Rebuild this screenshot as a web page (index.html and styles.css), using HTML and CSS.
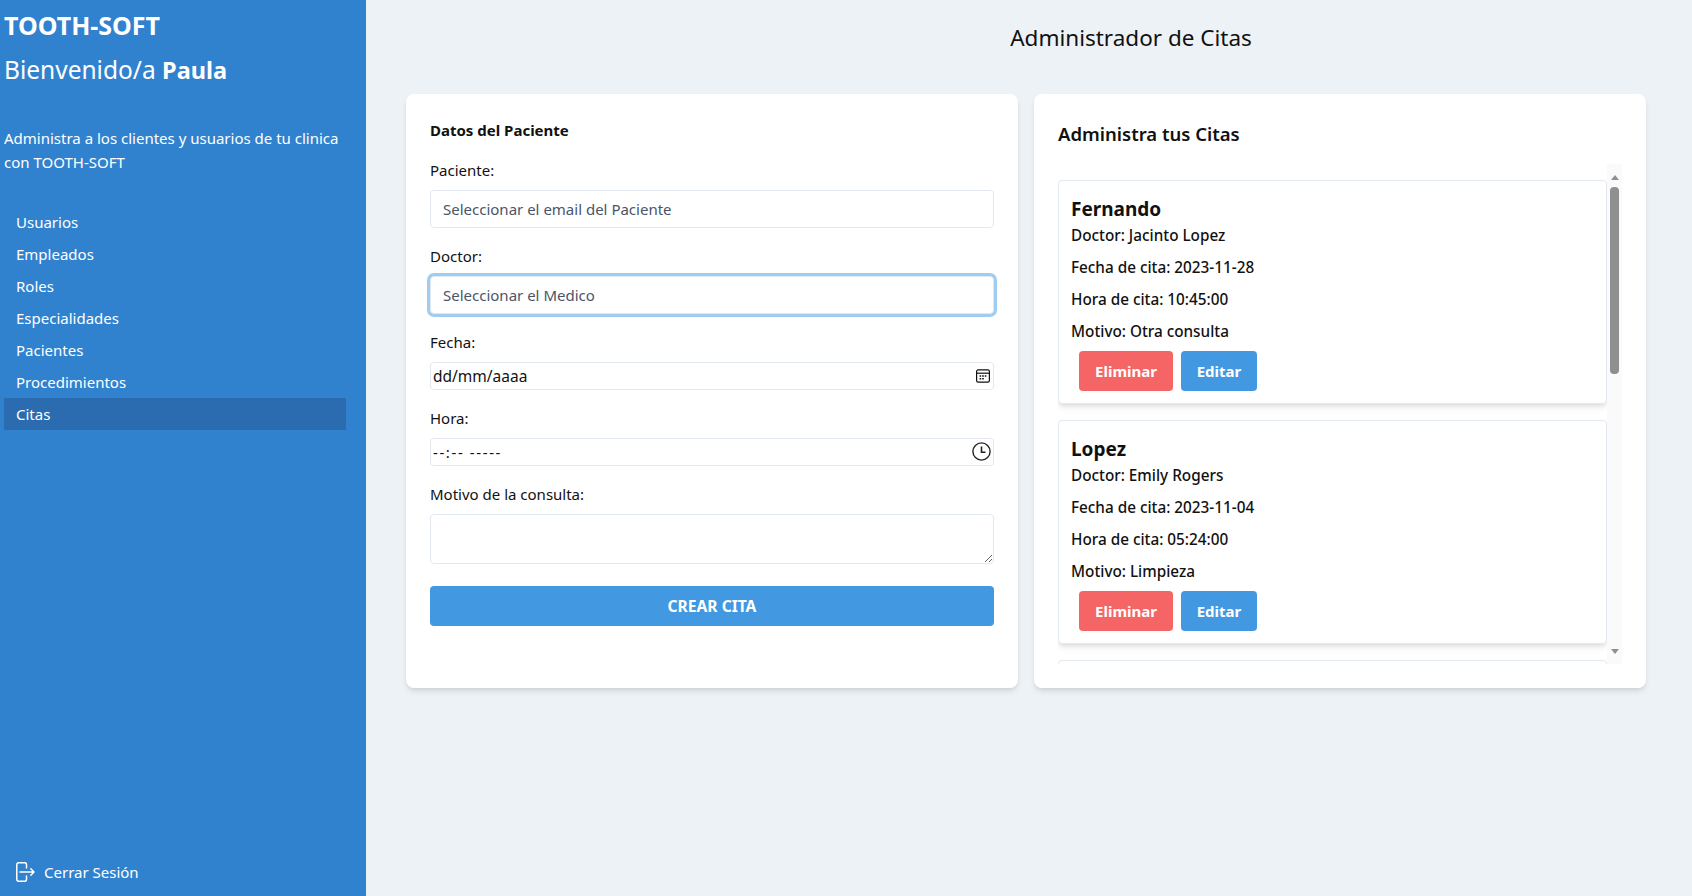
FILE: index.html
```html
<!DOCTYPE html>
<html lang="es">
<head>
<meta charset="UTF-8" />
<meta name="viewport" content="width=device-width, initial-scale=1" />
<title>Administrador de Citas</title>
<link rel="stylesheet" href="styles.css">
</head>
<body>
<aside class="sidebar">
  <h1 class="brand">TOOTH-SOFT</h1>
  <p class="welcome">Bienvenido/a <strong>Paula</strong></p>
  <p class="intro">Administra a los clientes y usuarios de tu clinica con TOOTH-SOFT</p>
  <nav class="menu">
    <a href="#">Usuarios</a>
    <a href="#">Empleados</a>
    <a href="#">Roles</a>
    <a href="#">Especialidades</a>
    <a href="#">Pacientes</a>
    <a href="#">Procedimientos</a>
    <a href="#" class="active">Citas</a>
  </nav>
  <a href="#" class="logout">
    <svg width="20" height="20" viewBox="0 0 20 20" fill="none" stroke="#fff" stroke-width="1.5" stroke-linecap="round" stroke-linejoin="round">
      <path d="M10.5 6V2.5a1.8 1.8 0 0 0-1.8-1.8H2.6A1.8 1.8 0 0 0 .8 2.5v15a1.8 1.8 0 0 0 1.8 1.8h6.1a1.8 1.8 0 0 0 1.8-1.8V14"/>
      <path d="M4 10h14M14.8 6.8 18 10l-3.2 3.2"/>
    </svg>
    Cerrar Sesión
  </a>
</aside>

<main class="content">
  <h2 class="page-title">Administrador de Citas</h2>
  <div class="columns">
    <form class="panel form-panel">
      <h3 class="form-title">Datos del Paciente</h3>

      <label for="paciente">Paciente:</label>
      <input class="field" type="text" id="paciente" placeholder="Seleccionar el email del Paciente" />

      <label for="doctor">Doctor:</label>
      <input class="field focused" type="text" id="doctor" placeholder="Seleccionar el Medico" />

      <label for="fecha">Fecha:</label>
      <div class="field-icon">
        <input class="date-text" type="text" id="fecha" value="dd/mm/aaaa" />
        <svg class="cal-icon" width="14" height="14" viewBox="0 0 14 14" fill="none" stroke="#111" stroke-width="1.2">
          <rect x=".6" y=".9" width="12.8" height="12.2" rx="1.6"/>
          <path d="M.6 4.2h12.8"/>
          <path d="M3.6 7h1.6M6.2 7h1.6M8.8 7h1.6M3.6 9.8h1.6M6.2 9.8h1.6" stroke-width="1.5"/>
        </svg>
      </div>

      <label for="hora">Hora:</label>
      <div class="field-icon">
        <input class="time-text" type="text" id="hora" value="--:-- -----" />
        <svg class="clock-icon" width="19" height="19" viewBox="0 0 19 19" fill="none" stroke="#222" stroke-width="1.4">
          <circle cx="9.5" cy="9.5" r="8.6"/>
          <path d="M9.5 4.6v5.6h4" stroke-width="1.6"/>
        </svg>
      </div>

      <label for="motivo">Motivo de la consulta:</label>
      <textarea class="field motivo" id="motivo"></textarea>

      <button type="button" class="btn-crear">CREAR CITA</button>
    </form>

    <section class="panel list-panel">
      <h3 class="list-title">Administra tus Citas</h3>
      <div class="cita-scroll">
        <div class="cita-list">
          <article class="cita">
            <h4>Fernando</h4>
            <p>Doctor: Jacinto Lopez</p>
            <p>Fecha de cita: 2023-11-28</p>
            <p>Hora de cita: 10:45:00</p>
            <p>Motivo: Otra consulta</p>
            <div class="cita-actions">
              <button type="button" class="btn btn-delete">Eliminar</button>
              <button type="button" class="btn btn-edit">Editar</button>
            </div>
          </article>
          <article class="cita">
            <h4>Lopez</h4>
            <p>Doctor: Emily Rogers</p>
            <p>Fecha de cita: 2023-11-04</p>
            <p>Hora de cita: 05:24:00</p>
            <p>Motivo: Limpieza</p>
            <div class="cita-actions">
              <button type="button" class="btn btn-delete">Eliminar</button>
              <button type="button" class="btn btn-edit">Editar</button>
            </div>
          </article>
          <article class="cita"></article>
        </div>
        <div class="scrollbar">
          <span class="arrow-up"></span>
          <span class="thumb"></span>
          <span class="arrow-down"></span>
        </div>
      </div>
    </section>
  </div>
</main>
</body>
</html>
```

FILE: styles.css
```css
* {
  box-sizing: border-box;
}
html, body {
  height: 100%;
}
body {
  margin: 0;
  display: flex;
  height: 896px;
  overflow: hidden;
  background: #edf2f7;
  font-family: "Noto Sans", "Open Sans", sans-serif;
  font-size: 15px;
  line-height: 24px;
  color: #111;
}

/* Sidebar */
.sidebar {
  width: 366px;
  flex-shrink: 0;
  display: flex;
  flex-direction: column;
  padding: 9px 20px 12px 4px;
  background: #3182ce;
  color: #fff;
}
.brand {
  margin: 0;
  font-size: 25px;
  line-height: 32px;
  font-weight: 700;
}
.welcome {
  margin: 13px 0 0;
  font-size: 24.5px;
  line-height: 32px;
}
.welcome strong {
  font-size: 23.5px;
  font-weight: 700;
}
.intro {
  margin: 40px 0 0;
}
.menu {
  margin-top: 32px;
  display: flex;
  flex-direction: column;
}
.menu a {
  height: 32px;
  line-height: 32px;
  padding-left: 12px;
  color: #fff;
  text-decoration: none;
}
.menu a.active {
  background: #2b6cb0;
}
.logout {
  margin-top: auto;
  padding-left: 12px;
  display: flex;
  align-items: center;
  gap: 8px;
  color: #fff;
  text-decoration: none;
}

/* Main area */
.content {
  flex: 1;
  padding: 22px 0 0 40px;
}
.page-title {
  margin: 0 0 40px 210px;
  width: 1030px;
  text-align: center;
  font-size: 22.5px;
  line-height: 32px;
  font-weight: 400;
}
.columns {
  display: grid;
  grid-template-columns: 612px 612px;
  gap: 16px;
}
.panel {
  height: 594px;
  background: #fff;
  border-radius: 8px;
  box-shadow: 0 4px 6px -1px rgba(0,0,0,0.1), 0 2px 4px -1px rgba(0,0,0,0.06);
}

/* Form */
.form-panel {
  padding: 25px 24px;
  display: flex;
  flex-direction: column;
}
.form-title {
  margin: 0 0 18px;
  font-size: 15px;
  line-height: 22px;
  font-weight: 700;
}
label {
  display: block;
  line-height: 22px;
  margin-bottom: 9px;
}
.field,
.field-icon {
  display: block;
  width: 100%;
  margin-bottom: 17px;
  border: 1px solid #e2e8f0;
  border-radius: 4px;
  background: #fff;
  font: inherit;
}
.field {
  height: 38px;
  padding: 0 12px;
  color: #4a5568;
}
.field::placeholder {
  color: #4a5568;
  opacity: 1;
}
.field.focused {
  outline: none;
  box-shadow: 0 0 0 3px rgba(66,153,225,0.5);
}
.field-icon {
  height: 28px;
  display: flex;
  align-items: center;
  padding: 0 2px;
}
.field-icon input {
  flex: 1;
  min-width: 0;
  border: none;
  outline: none;
  padding: 0;
  font: inherit;
  color: #111;
  background: transparent;
}
.field-icon .date-text {
  font-size: 15.5px;
}
.field-icon .time-text {
  letter-spacing: 1.6px;
}
.cal-icon {
  margin-right: 1px;
}
.clock-icon {
  margin: -2px 0 0;
}
.motivo {
  height: 50px;
  margin-bottom: 22px;
  padding: 8px 12px;
  resize: vertical;
}
.btn-crear {
  height: 40px;
  border: none;
  border-radius: 4px;
  background: #4299e1;
  color: #fff;
  font: inherit;
  font-size: 15.6px;
  font-weight: 700;
}

/* Citas list */
.list-panel {
  padding: 26px 24px;
}
.list-title {
  margin: 0 0 16px;
  font-size: 18.5px;
  line-height: 28px;
  font-weight: 600;
}
.cita-scroll {
  display: flex;
  height: 500px;
}
.cita-list {
  flex: 1;
  min-width: 0;
  padding-top: 16px;
  overflow: hidden;
}
.cita {
  height: 224px;
  margin-bottom: 16px;
  padding: 14px 12px 0;
  background: #fff;
  border: 1px solid #e2e8f0;
  border-radius: 4px;
  box-shadow: 0 4px 6px -1px rgba(0,0,0,0.1), 0 2px 4px -1px rgba(0,0,0,0.06);
}
.cita h4 {
  margin: 0;
  font-size: 19px;
  line-height: 28px;
  font-weight: 700;
}
.cita p {
  margin: 0 0 8px;
  font-size: 15.3px;
  font-weight: 500;
}
.cita-actions {
  display: flex;
  gap: 8px;
  margin-left: 8px;
}
.btn {
  height: 40px;
  border: none;
  border-radius: 4px;
  color: #fff;
  font: inherit;
  font-weight: 700;
}
.btn-delete {
  width: 94px;
  background: #f56565;
}
.btn-edit {
  width: 76px;
  background: #4299e1;
}

/* Scrollbar beside the list */
.scrollbar {
  width: 15px;
  flex-shrink: 0;
  display: flex;
  flex-direction: column;
  align-items: center;
  padding: 11px 0 10px;
  background: #fafafa;
}
.arrow-up,
.arrow-down {
  width: 0;
  height: 0;
  border-left: 4.5px solid transparent;
  border-right: 4.5px solid transparent;
}
.arrow-up {
  border-bottom: 5px solid #8f8f8f;
}
.arrow-down {
  margin-top: auto;
  border-top: 5px solid #8f8f8f;
}
.thumb {
  width: 8.5px;
  height: 187px;
  margin-top: 7px;
  border-radius: 4px;
  background: #8f8f8f;
}
```
